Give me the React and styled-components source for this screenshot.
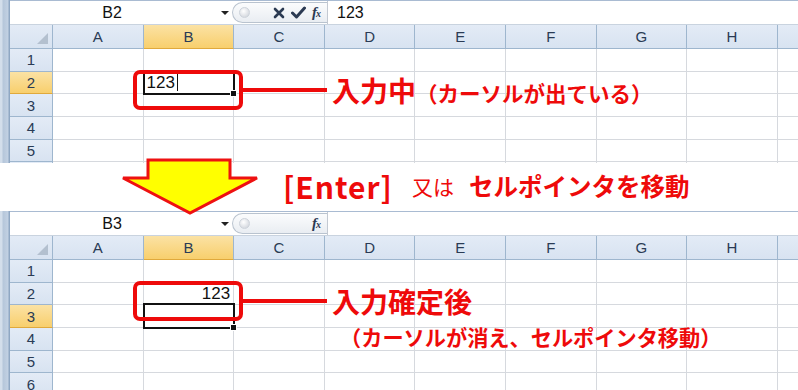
import React from "react";
import styled, { createGlobalStyle } from "styled-components";

const GlobalStyle = createGlobalStyle`
  html, body {
    margin: 0;
    padding: 0;
    background: #fff;
    font-family: "Liberation Sans", Arial, sans-serif;
  }
`;

const RED = "#ee0a0a";
// the last column is only a sliver at the right edge, its letter is off screen
const COLS = ["A", "B", "C", "D", "E", "F", "G", "H", "I"];

const Page = styled.div`
  position: relative;
  width: 798px;
  height: 390px;
  overflow: hidden;
  background: #fff;
`;

const Sheet = styled.div`
  position: relative;
  display: flex;
  height: ${(p) => p.$height}px;
  overflow: hidden;
`;

const Frame = styled.div`
  width: 10px;
  flex: none;
  background: linear-gradient(90deg, #d3deeb 0, #d3deeb 2px, #b5c6da 3px, #c2d1e3 8px, #8fa7c3 9px);
`;

const Main = styled.div`
  flex: 1;
  display: flex;
  flex-direction: column;
  min-width: 0;
  overflow: hidden;
`;

const TopBand = styled.div`
  height: 6px;
  background: linear-gradient(#c9d7e8, #b7c8dc);
  border-bottom: 1px solid #a9bbd2;
`;

const FormulaBar = styled.div`
  display: flex;
  align-items: stretch;
  height: 23px;
  background: #fff;
`;

const NameBox = styled.div`
  position: relative;
  width: 222px;
  font-size: 16px;
  line-height: 23px;
  text-align: center;
  color: #111;
  padding-right: 18px;
  box-sizing: border-box;
`;

const Drop = styled.span`
  position: absolute;
  right: 3px;
  top: 10px;
  width: 0;
  height: 0;
  border-left: 4px solid transparent;
  border-right: 4px solid transparent;
  border-top: 4px solid #222;
`;

const Pill = styled.div`
  display: flex;
  align-items: center;
  width: 95px;
  box-sizing: border-box;
  margin: 1px 0;
  padding-left: 6px;
  border: 1px solid #b9c3cf;
  border-right: none;
  border-radius: 12px 0 0 12px;
  background: linear-gradient(#fbfcfd, #e9edf2);
`;

const Knob = styled.span`
  width: 9px;
  height: 9px;
  border-radius: 50%;
  background: radial-gradient(circle at 40% 35%, #fff, #c9ced6);
  border: 1px solid #cdd3db;
`;

const Icons = styled.div`
  display: flex;
  align-items: center;
  gap: 6px;
  margin-left: auto;
  margin-right: 7px;
`;

const Fx = styled.span`
  font-family: "Liberation Serif", serif;
  font-style: italic;
  font-weight: bold;
  font-size: 15px;
  color: #2b3a52;
  letter-spacing: -1px;

  small {
    font-size: 10px;
  }
`;

const Input = styled.div`
  flex: 1;
  border-left: 1px solid #c3c9d2;
  padding-left: 9px;
  font-size: 16px;
  line-height: 23px;
  color: #111;
`;

const Gap = styled.div`
  height: 3px;
  background: #e3e9f1;
  border-top: 1px solid #c9d3df;
`;

const Grid = styled.div`
  display: grid;
  grid-template-columns: 43px repeat(9, 90.6px);
  grid-template-rows: 24px;
  grid-auto-rows: 22.7px;
`;

const Head = styled.div`
  position: relative;
  box-sizing: border-box;
  display: flex;
  align-items: center;
  justify-content: center;
  font-size: 15px;
  color: #2a3b55;
  border-right: 1px solid #9eb6ce;
  border-bottom: 1px solid #9eb6ce;
  background: ${(p) =>
    p.$active
      ? "linear-gradient(#fbe2a4, #f8cf6d)"
      : "linear-gradient(#e3ebf6, #d8e3f1)"};
  ${(p) => p.$active && "border-bottom-color: #e0a93c;"}
`;

const Corner = styled(Head)`
  &::after {
    content: "";
    position: absolute;
    right: 4px;
    bottom: 4px;
    border-left: 11px solid transparent;
    border-bottom: 11px solid #b3c0cf;
  }
`;

const Cell = styled.div`
  position: relative;
  box-sizing: border-box;
  border-right: 1px solid #d6d9de;
  border-bottom: 1px solid #d6d9de;
  font-size: 17px;
  line-height: 22px;
  padding: 0 3px;
  color: #111;
  text-align: ${(p) => (p.$right ? "right" : "left")};
  white-space: nowrap;
`;

const Selection = styled.div`
  position: absolute;
  z-index: 1;
  top: -2px;
  left: -1px;
  right: -2px;
  bottom: -2px;
  border: 2px solid #111;
  pointer-events: none;

  &::after {
    content: "";
    position: absolute;
    right: -4px;
    bottom: -4px;
    width: 5px;
    height: 5px;
    background: #111;
    border: 1px solid #fff;
  }
`;

const Caret = styled.span`
  display: inline-block;
  width: 1px;
  height: 18px;
  background: #111;
  vertical-align: -3px;
  margin-left: 2px;
`;

const Callout = styled.div`
  position: absolute;
  z-index: 2;
  left: 133px;
  top: 70px;
  display: flex;
  align-items: flex-start;
  font-family: "Noto Sans CJK JP", sans-serif;
  font-weight: bold;
  color: ${RED};
`;

const Ring = styled.div`
  width: 110px;
  height: 40px;
  box-sizing: border-box;
  border: 4px solid ${RED};
  border-radius: 7px;
`;

const Leader = styled.div`
  width: 84px;
  height: 4px;
  margin-top: 18px;
  background: ${RED};
`;

const Notes = styled.div`
  margin-left: 5px;
  margin-top: 6px;
  display: flex;
  flex-direction: ${(p) => (p.$stack ? "column" : "row")};
  align-items: ${(p) => (p.$stack ? "flex-start" : "baseline")};
`;

const Title = styled.span`
  font-size: 28px;
  line-height: 28px;
  white-space: nowrap;
`;

const Sub = styled.span`
  font-size: 21.5px;
  line-height: 22px;
  white-space: nowrap;
  ${(p) => p.$below && "margin: 11px 0 0 8px; font-size: 21.2px;"}
`;

const Middle = styled.div`
  position: relative;
  z-index: 3;
  height: 45px;
  display: flex;
  align-items: center;
  padding: 0 0 3px 283px;
  font-family: "Noto Sans CJK JP", sans-serif;
  color: ${RED};
  white-space: nowrap;
`;

const Arrow = styled.svg`
  position: absolute;
  left: 120px;
  top: -6px;
`;

const Key = styled.span`
  font-size: 30px;
  font-weight: bold;
  letter-spacing: 1px;
  margin-right: 19px;
`;

const Or = styled.span`
  font-size: 21px;
  margin-right: 15px;
`;

const Action = styled.span`
  font-size: 24.5px;
  font-weight: bold;
`;

const XIcon = () => (
  <svg width="12" height="12" viewBox="0 0 12 12">
    <path d="M2 2 L10 10 M10 2 L2 10" stroke="#2b3a52" strokeWidth="2.6" strokeLinecap="round" />
  </svg>
);

const CheckIcon = () => (
  <svg width="15" height="13" viewBox="0 0 15 13">
    <path d="M1.5 7 L5.5 11 L13.5 2" stroke="#2b3a52" strokeWidth="3" fill="none" strokeLinejoin="round" strokeLinecap="round" />
  </svg>
);

function SheetView({ height, name, value, editing, activeRow, rows, cells, callout }) {
  return (
    <Sheet $height={height}>
      <Frame />
      <Main>
        <TopBand />
        <FormulaBar>
          <NameBox>
            {name}
            <Drop />
          </NameBox>
          <Pill>
            <Knob />
            <Icons>
              {editing && <XIcon />}
              {editing && <CheckIcon />}
              <Fx>
                f<small>x</small>
              </Fx>
            </Icons>
          </Pill>
          <Input>{value}</Input>
        </FormulaBar>
        <Gap />
        <Grid>
          <Corner />
          {COLS.map((c) => (
            <Head key={c} $active={c === "B"}>
              {c === "I" ? null : c}
            </Head>
          ))}
          {Array.from({ length: rows }, (_, i) => i + 1).map((r) => (
            <React.Fragment key={r}>
              <Head $active={r === activeRow}>{r}</Head>
              {COLS.map((c) => {
                const cell = cells[c + r];
                return (
                  <Cell key={c} $right={cell && cell.right}>
                    {cell && cell.text}
                    {cell && cell.caret && <Caret />}
                    {c === "B" && r === activeRow && <Selection />}
                  </Cell>
                );
              })}
            </React.Fragment>
          ))}
        </Grid>
      </Main>
      {callout}
    </Sheet>
  );
}

export default function App() {
  return (
    <Page>
      <GlobalStyle />
      <SheetView
        height={163}
        name="B2"
        value="123"
        editing
        activeRow={2}
        rows={6}
        cells={{ B2: { text: "123", caret: true } }}
        callout={
          <Callout>
            <Ring />
            <Leader />
            <Notes>
              <Title>入力中</Title>
              <Sub>（カーソルが出ている）</Sub>
            </Notes>
          </Callout>
        }
      />
      <Middle>
        <Arrow width="140" height="60" viewBox="0 0 140 60">
          <polygon
            points="28,3 110,3 110,21 137,21 70,56 3,21 28,21"
            fill="#ffff00"
            stroke="#ee1111"
            strokeWidth="3"
            strokeLinejoin="miter"
          />
        </Arrow>
        <Key>[Enter]</Key>
        <Or>又は</Or>
        <Action>セルポインタを移動</Action>
      </Middle>
      <SheetView
        height={182}
        name="B3"
        value=""
        activeRow={3}
        rows={7}
        cells={{ B2: { text: "123", right: true } }}
        callout={
          <Callout>
            <Ring />
            <Leader />
            <Notes $stack>
              <Title>入力確定後</Title>
              <Sub $below>（カーソルが消え、セルポインタ移動）</Sub>
            </Notes>
          </Callout>
        }
      />
    </Page>
  );
}
